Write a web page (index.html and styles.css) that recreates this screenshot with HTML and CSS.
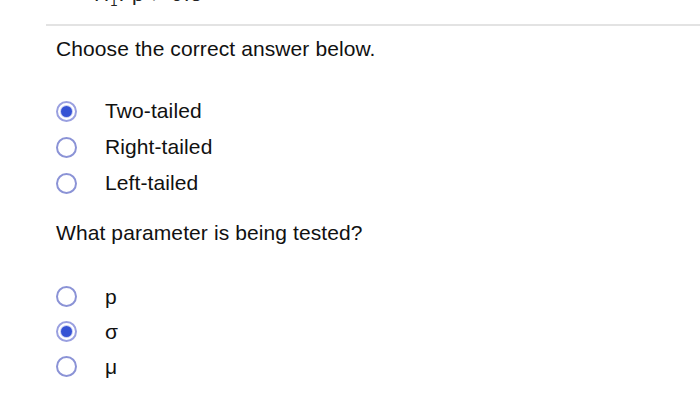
FILE: index.html
```html
<!DOCTYPE html>
<html>
<head>
<meta charset="utf-8">
<link rel="stylesheet" href="styles.css">
</head>
<body>
<div class="page">
  <div class="top"><span class="cut">H<sub>1</sub>: p ≠ 0.5</span></div>
  <div class="rule"></div>
  <div class="content">
    <p class="q">Choose the correct answer below.</p>
    <ul class="opts first">
      <li><span class="radio on"></span><span class="lbl">Two-tailed</span></li>
      <li><span class="radio"></span><span class="lbl">Right-tailed</span></li>
      <li><span class="radio"></span><span class="lbl">Left-tailed</span></li>
    </ul>
    <p class="q q2">What parameter is being tested?</p>
    <ul class="opts second">
      <li><span class="radio"></span><span class="lbl">p</span></li>
      <li><span class="radio on"></span><span class="lbl">σ</span></li>
      <li><span class="radio"></span><span class="lbl">μ</span></li>
    </ul>
  </div>
</div>
</body>
</html>
```
FILE: styles.css
```css
* { box-sizing: border-box; }
html, body { margin: 0; padding: 0; background: #fff; }
body { font-family: "Liberation Sans", Arial, sans-serif; color: #111; width: 700px; height: 420px; overflow: hidden; }
.page { padding-left: 46px; }
.top { height: 24px; overflow: hidden; position: relative; }
.cut { display: block; margin-top: -17px; margin-left: 48px; font-size: 21px; line-height: 21px; color: #222; letter-spacing: 1px; }
.cut sub { font-size: 13px; }
.rule { height: 2px; background: #e3e3e3; }
.content { padding-left: 10px; }
.q { margin: 11px 0 0; font-size: 21px; line-height: 24px; letter-spacing: 0.1px; }
.q2 { margin-top: 20px; }
.opts { list-style: none; margin: 0; padding: 0; }
.opts.first { margin-top: 32px; }
.opts.second { margin-top: 34px; }
.opts li { display: flex; align-items: center; height: 36px; }
.second li { height: 35px; }
.radio { width: 21px; height: 21px; border-radius: 50%; border: 2px solid #8b93d6; background: #fff; flex: none; display: flex; align-items: center; justify-content: center; }
.radio.on { border-color: #9aa0e0; }
.radio.on::after { content: ""; width: 11px; height: 11px; border-radius: 50%; background: #3552d4; box-shadow: 0 0 0 1px #c9cdf3; }
.lbl { margin-left: 28px; font-size: 21px; line-height: 24px; letter-spacing: 0.1px; }
```
